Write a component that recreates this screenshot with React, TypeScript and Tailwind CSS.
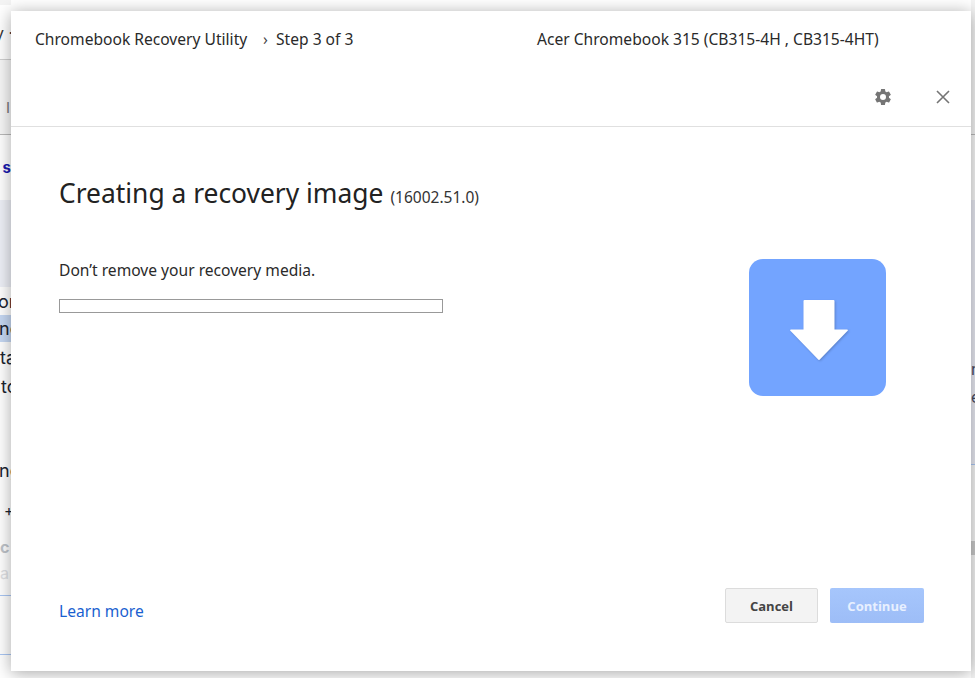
import React from "react";

export default function App() {
  return (
    <div className="relative h-[678px] w-[975px] overflow-hidden bg-white font-['Noto_Sans',sans-serif]">
      {/* Page behind the dialog: only its margins stay visible */}
      <div className="flex h-full justify-between">
        <div className="flex h-full w-[11px] flex-col overflow-hidden whitespace-nowrap font-['Inter',sans-serif] text-[18px] text-[#1b2430]">
          <div className="h-[5px] bg-[#f4f4f4]" />
          <div className="flex h-[55px] items-center border-b border-[#d0d0d0] bg-white pt-[2px] text-[16px] text-[#333]"><span className="-ml-[5px]">y ·</span></div>
          <div className="flex h-[75px] items-center border-b border-[#b9b9b9] bg-[#f7f7f7] pl-[6px] pt-[22px] text-[15px] text-[#777]">I</div>
          <div className="flex h-[65px] items-center justify-end bg-white pt-[2px] text-[15px] font-bold text-[#1a1ab0]"><span>s</span></div>
          <div className="h-[87px] bg-[#eef0f7]" />
          <div className="flex h-[28px] items-center"><span className="-ml-[2px]">or</span></div>
          <div className="flex h-[27px] items-center bg-[#c6d8f3]"><span className="-ml-[1px]">ne</span></div>
          <div className="flex h-[30px] items-center"><span>ta</span></div>
          <div className="flex h-[28px] items-center"><span className="ml-[1px]">to</span></div>
          <div className="h-[55px]" />
          <div className="flex h-[30px] items-center"><span className="-ml-[1px]">ng</span></div>
          <div className="flex h-[52px] items-center pl-[4px] text-[15px]">+</div>
          <div className="flex h-[20px] items-center text-[16px] font-bold text-[#bfc4ca]">c</div>
          <div className="flex h-[39px] items-center border-b border-[#a9c6f3] pb-[6px] text-[16px] text-[#dfe1e4]">a</div>
          <div className="h-[59px] border-b border-[#a9c6f3]" />
        </div>
        <div className="flex h-full w-[4px] flex-col overflow-hidden whitespace-nowrap font-['Inter',sans-serif] text-[16px] text-[#444a63]">
          <div className="h-[135px] border-b border-[#b9b9b9] bg-[#f4f4f4]" />
          <div className="h-[65px] bg-[#f7f7f7]" />
          <div className="h-[155px] bg-[#e8e9f2]" />
          <div className="flex h-[28px] items-center bg-[#e8e9f2]">r</div>
          <div className="flex h-[28px] items-center bg-[#e8e9f2]">e</div>
          <div className="h-[54px] border-b border-[#a9c6f3] bg-[#e8e9f2]" />
          <div className="h-[76px] bg-[#f5f5f5]" />
          <div className="h-[14px] bg-[#c9c9c9]" />
          <div className="flex-1 bg-[#f4f4f4]" />
        </div>
      </div>

      {/* Dialog */}
      <div className="absolute left-[11px] top-[11px] flex h-[660px] w-[960px] flex-col bg-white text-[#2a2a2a] shadow-[0_2px_16px_rgba(0,0,0,0.35)]">
        <header className="h-[116px] border-b border-[#e0e0e0]">
          <div className="flex h-[58px] items-center pl-[24px] text-[15.6px]">
            <span className="w-[228px] whitespace-nowrap">Chromebook Recovery Utility</span>
            <span className="w-[13px] text-[#444]">›</span>
            <span className="w-[261px] whitespace-nowrap">Step 3 of 3</span>
            <span className="whitespace-nowrap">Acer Chromebook 315 (CB315-4H , CB315-4HT)</span>
          </div>
          <div className="flex justify-end gap-[40px] pr-[18px] pt-[18px] text-[#757575]">
            <svg viewBox="0 0 24 24" className="h-[20px] w-[20px]" fill="currentColor">
              <path d="M19.14 12.94c.04-.3.06-.61.06-.94s-.02-.64-.07-.94l2.03-1.58a.49.49 0 0 0 .12-.61l-1.92-3.32a.49.49 0 0 0-.59-.22l-2.39.96a7.03 7.03 0 0 0-1.62-.94l-.36-2.54a.48.48 0 0 0-.48-.41h-3.84a.48.48 0 0 0-.47.41l-.36 2.54c-.59.24-1.13.57-1.62.94l-2.39-.96a.48.48 0 0 0-.59.22L2.74 8.87a.47.47 0 0 0 .12.61l2.03 1.58c-.05.3-.09.63-.09.94s.02.64.07.94l-2.03 1.58a.49.49 0 0 0-.12.61l1.92 3.32c.12.22.37.29.59.22l2.39-.96c.5.38 1.03.7 1.62.94l.36 2.54c.05.24.24.41.48.41h3.84c.24 0 .44-.17.47-.41l.36-2.54c.59-.24 1.13-.56 1.62-.94l2.39.96c.22.08.47 0 .59-.22l1.92-3.32a.46.46 0 0 0-.12-.61l-2.01-1.58zM12 15.6A3.6 3.6 0 1 1 12 8.4a3.6 3.6 0 0 1 0 7.2z" />
            </svg>
            <svg viewBox="0 0 20 20" className="h-[20px] w-[20px]" fill="none" stroke="currentColor" strokeWidth="1.6">
              <path d="M4 4l12 12M16 4L4 16" />
            </svg>
          </div>
        </header>

        <main className="flex flex-1 justify-between pl-[48px] pr-[85px] pt-[47px]">
          <div>
            <h1 className="flex items-baseline gap-[7px] whitespace-nowrap text-[26.4px] leading-[38px] text-[#222]">
              Creating a recovery image
              <span className="text-[15.5px] text-[#333]">(16002.51.0)</span>
            </h1>
            <p className="mt-[42px] text-[15.6px] leading-[24px]">Don’t remove your recovery media.</p>
            <div className="mt-[17px] h-[14px] w-[384px] border border-[#999] bg-white" />
          </div>
          <div className="mt-[85px] flex h-[137px] w-[137px] items-center justify-center rounded-[14px] bg-[#73a4ff]">
            <svg viewBox="0 0 58 60" className="ml-[3px] mt-[4px] h-[60px] w-[58px] drop-shadow-[1px_1px_1px_rgba(0,0,0,0.2)]" fill="white">
              <path d="M13.5 1a1 1 0 0 1 1-1h29a1 1 0 0 1 1 1v28.5h12.5c1 0 1.2.7.6 1.3L29.8 59.5a1 1 0 0 1-1.6 0L.4 30.8c-.6-.6-.4-1.3.6-1.3h12.5z" />
            </svg>
          </div>
        </main>

        <footer className="flex h-[83px] items-start justify-between pl-[48px] pr-[47px]">
          <a className="mt-[11px] text-[15.6px] leading-[24px] text-[#1a5fd0]">Learn more</a>
          <div className="flex gap-[12px] font-['Open_Sans',sans-serif] text-[13px] font-bold">
            <button className="h-[35px] w-[93px] rounded-[2px] border border-[#dcdcdc] bg-[#f3f3f3] pt-[2px] text-[#444]">Cancel</button>
            <button className="h-[35px] w-[94px] rounded-[2px] bg-gradient-to-b from-[#a6c6fc] to-[#9dbdf7] pt-[2px] text-[#e8f0ff]">Continue</button>
          </div>
        </footer>
      </div>
    </div>
  );
}
